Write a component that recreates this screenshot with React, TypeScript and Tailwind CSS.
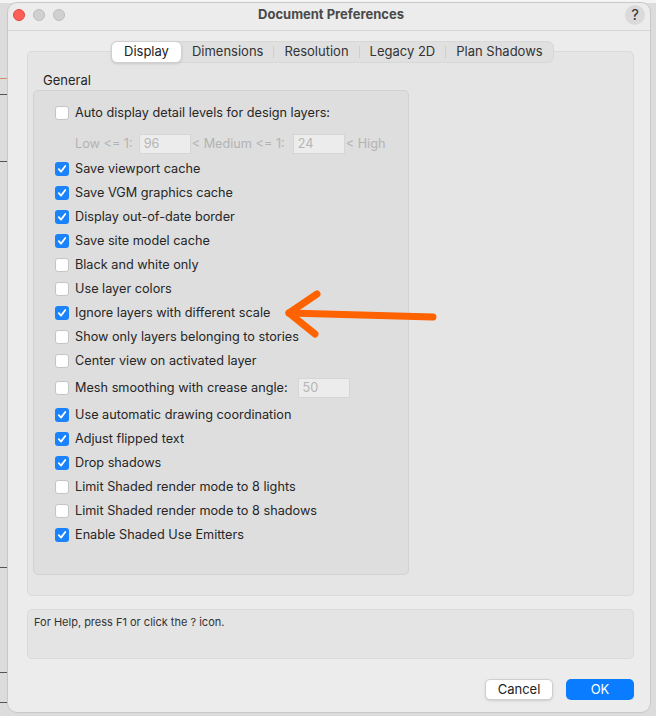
import React from "react";

type Row = { label: string; checked: boolean };

const rows: Row[] = [
  { label: "Save viewport cache", checked: true },
  { label: "Save VGM graphics cache", checked: true },
  { label: "Display out-of-date border", checked: true },
  { label: "Save site model cache", checked: true },
  { label: "Black and white only", checked: false },
  { label: "Use layer colors", checked: false },
  { label: "Ignore layers with different scale", checked: true },
  { label: "Show only layers belonging to stories", checked: false },
  { label: "Center view on activated layer", checked: false },
];

const rows2: Row[] = [
  { label: "Use automatic drawing coordination", checked: true },
  { label: "Adjust flipped text", checked: true },
  { label: "Drop shadows", checked: true },
  { label: "Limit Shaded render mode to 8 lights", checked: false },
  { label: "Limit Shaded render mode to 8 shadows", checked: false },
  { label: "Enable Shaded Use Emitters", checked: true },
];

const Check = ({ checked }: { checked: boolean }) =>
  checked ? (
    <span className="w-[14px] h-[14px] rounded-[3px] bg-[#1a82fb] flex items-center justify-center shrink-0">
      <svg width="10" height="10" viewBox="0 0 10 10">
        <path d="M1.8 5.2 L4 7.6 L8.3 2" fill="none" stroke="white" strokeWidth="1.8" strokeLinecap="round" strokeLinejoin="round" />
      </svg>
    </span>
  ) : (
    <span className="w-[14px] h-[14px] rounded-[3px] bg-white border border-[#c4c4c4] shrink-0" />
  );

const CheckRow = ({ row }: { row: Row }) => (
  <div className="h-[24px] flex items-center gap-[6px]">
    <Check checked={row.checked} />
    <span className="text-[12.7px] text-[#262626]">{row.label}</span>
  </div>
);

const Field = ({ value }: { value: string }) => (
  <span className="w-[52px] h-[20px] bg-[#ececec] border border-[#d6d6d6] text-[12.7px] text-[#b5b5b5] pl-[4px] flex items-center">
    {value}
  </span>
);

const tabs = ["Display", "Dimensions", "Resolution", "Legacy 2D", "Plan Shadows"];

export default function App() {
  return (
    <div
      className="relative w-[656px] h-[716px] bg-[#dcdcdc] overflow-hidden"
      style={{ fontFamily: 'Inter, "Liberation Sans", Arial, sans-serif' }}
    >
      {/* drawing behind the window */}
      <div className="absolute left-0 top-0 w-[656px] h-[3px] bg-[#f4f4f4]" />
      <div className="absolute left-0 top-[78px] w-[8px] h-[1px] bg-[#d98a6a]" />
      <div className="absolute left-0 top-[94px] w-[8px] h-[1px] bg-[#555]" />
      <div className="absolute left-0 top-[161px] w-[8px] h-[1px] bg-[#555]" />
      <div className="absolute left-0 top-[567px] w-[8px] h-[1px] bg-[#555]" />
      <div className="absolute left-0 top-[672px] w-[8px] h-[1px] bg-[#555]" />
      <div className="absolute left-0 top-[702px] w-[8px] h-[1px] bg-[#555]" />

      <div className="absolute left-[7px] top-[2px] w-[644px] h-[711px] bg-[#ececec] rounded-[10px] border border-[#c8c8c8] flex flex-col">
        {/* title bar */}
        <div className="h-[28px] border-b border-[#d6d6d6] grid grid-cols-[1fr_auto_1fr] items-center px-[4px] pb-[3px]">
          <div className="flex gap-[8px] pl-[1px]">
            <span className="w-[12px] h-[12px] rounded-full bg-[#fe5f57] border border-[#e2463f]" />
            <span className="w-[12px] h-[12px] rounded-full bg-[#d0d0d0] border border-[#bdbdbd]" />
            <span className="w-[12px] h-[12px] rounded-full bg-[#d0d0d0] border border-[#bdbdbd]" />
          </div>
          <div className="text-center text-[13px] font-bold text-[#4a4a4a] pl-[4px]">Document Preferences</div>
          <div className="flex justify-end">
            <span className="w-[20px] h-[20px] rounded-full bg-[#dadada] flex items-center justify-center text-[15px] text-[#333] mr-[1px]">?</span>
          </div>
        </div>

        {/* tab view */}
        <div className="relative ml-[19px] mr-[16px] mt-[20px] h-[545px] bg-[#e5e5e5] border border-[#dadada] rounded-[5px]">
          <div className="absolute left-[83px] top-[-11px] flex items-center h-[22px] bg-[#e0e0e0] rounded-[6px] border border-[#d8d8d8]">
            {tabs.map((t, i) => (
              <React.Fragment key={t}>
                {i > 1 && <span className="w-[1px] h-[12px] bg-[#cfcfcf]" />}
                <span
                  className={
                    i === 0
                      ? "h-[22px] -my-[1px] -ml-[1px] px-[12px] bg-white rounded-[6px] border border-[#d0d0d0] shadow-sm flex items-center text-[13px] text-[#222]"
                      : "px-[10px] text-[13px] text-[#333]"
                  }
                >
                  {t}
                </span>
              </React.Fragment>
            ))}
          </div>

          <div className="pt-[21px] pl-[15px] text-[13px] text-[#262626] leading-[15px]">General</div>
          <div className="ml-[5px] mt-[2px] w-[376px] h-[485px] bg-[#dedede] border border-[#d2d2d2] rounded-[5px] pt-[10px] pl-[21px]">
            <CheckRow row={{ label: "Auto display detail levels for design layers:", checked: false }} />
            <div className="h-[26px] mt-[6px] flex items-center pl-[20px] text-[12.7px] text-[#b3b3b3]">
              <span className="mr-[6px]">Low &lt;= 1:</span>
              <Field value="96" />
              <span className="ml-[1px] mr-[8px]">&lt; Medium &lt;= 1:</span>
              <Field value="24" />
              <span className="ml-[1px]">&lt; High</span>
            </div>
            {rows.map((r) => (
              <CheckRow key={r.label} row={r} />
            ))}
            <div className="h-[30px] flex items-center gap-[6px]">
              <Check checked={false} />
              <span className="text-[12.7px] text-[#262626]">Mesh smoothing with crease angle:</span>
              <span className="ml-[4px]">
                <Field value="50" />
              </span>
            </div>
            {rows2.map((r) => (
              <CheckRow key={r.label} row={r} />
            ))}
          </div>
        </div>

        {/* help area */}
        <div className="ml-[19px] mr-[16px] mt-[13px] h-[50px] bg-[#e4e4e4] border border-[#dadada] rounded-[5px] px-[6px] pt-[4px] text-[11px] text-[#333]">
          For Help, press F1 or click the ? icon.
        </div>

        {/* buttons */}
        <div className="flex justify-end gap-[13px] mr-[16px] mt-[20px]">
          <button className="w-[68px] h-[21px] bg-white border border-[#cfcfcf] rounded-[5px] shadow-sm text-[13px] text-[#222]">Cancel</button>
          <button className="w-[68px] h-[21px] bg-[#0a7cff] rounded-[5px] text-[13px] text-white">OK</button>
        </div>
      </div>

      {/* annotation arrow */}
      <svg className="absolute left-0 top-0 pointer-events-none" width="656" height="716">
        <g stroke="#ff6200" strokeWidth="7" strokeLinecap="round" strokeLinejoin="round" fill="none">
          <path d="M433 317 L289 313" />
          <path d="M317 294 L289 313 L315 334" />
        </g>
      </svg>
    </div>
  );
}
